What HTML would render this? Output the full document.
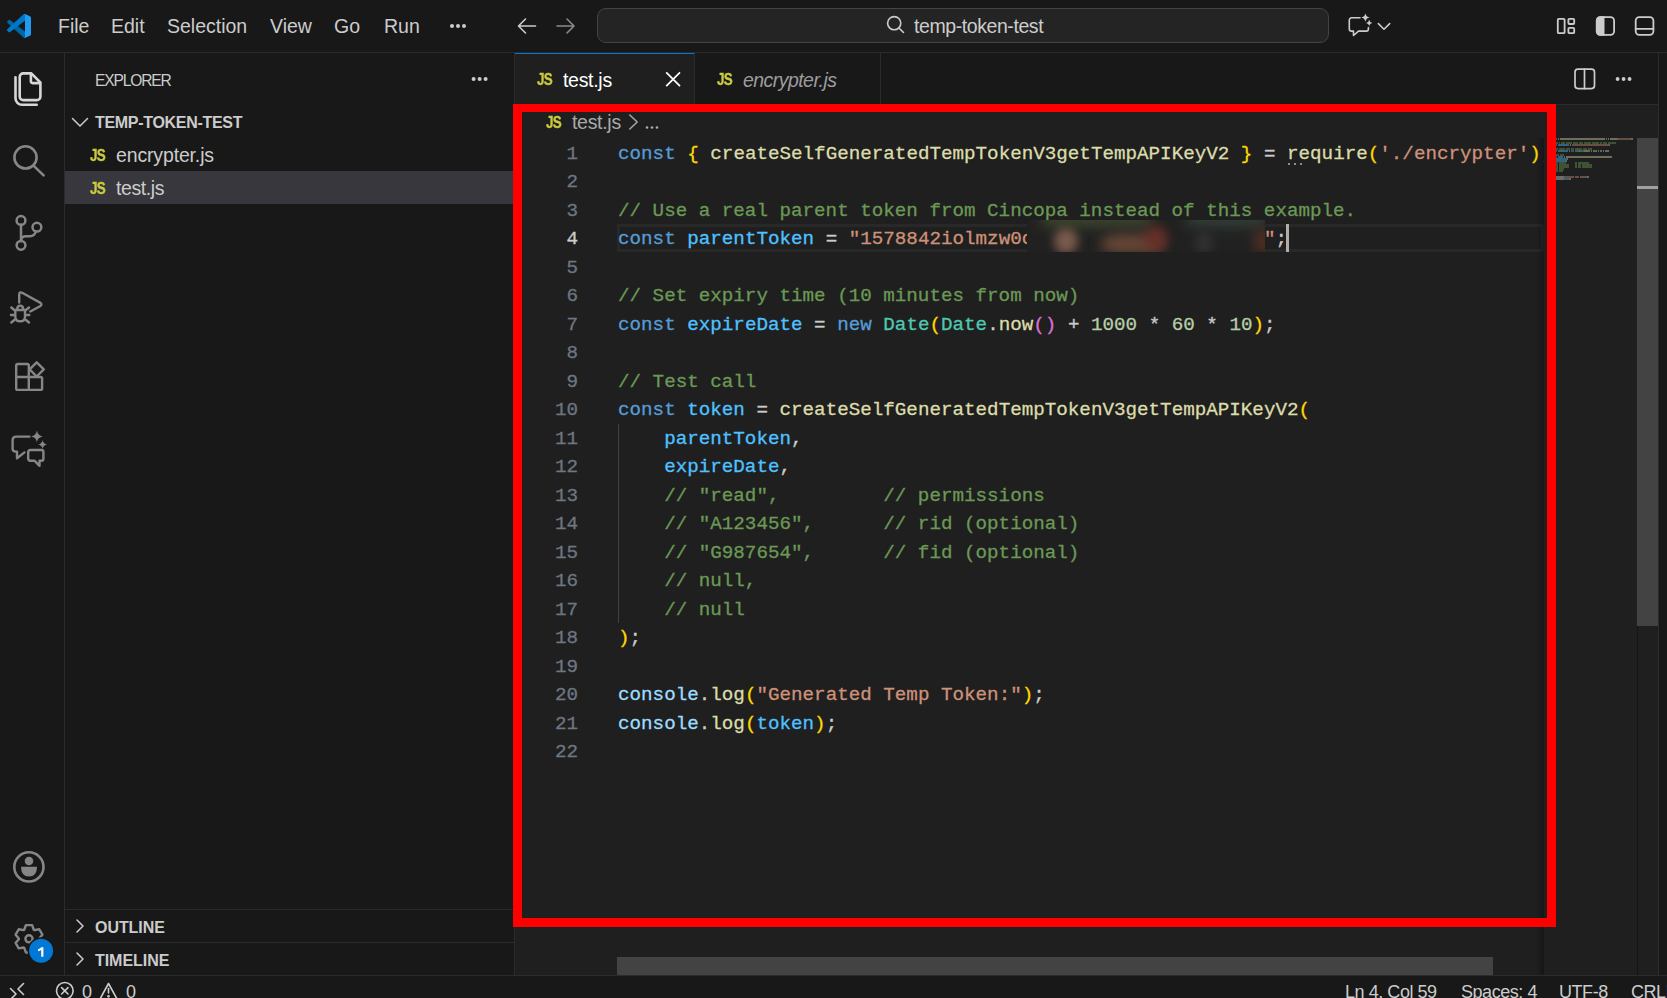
<!DOCTYPE html>
<html><head><meta charset="utf-8">
<style>
*{margin:0;padding:0;box-sizing:border-box}
html,body{width:1667px;height:998px;overflow:hidden;background:#181818;font-family:"Liberation Sans",sans-serif;color:#cccccc}
.a{position:absolute}
.t{position:absolute;white-space:pre;line-height:1}
#titlebar{left:0;top:0;width:1667px;height:53px;background:#181818;border-bottom:1px solid #2b2b2b}
.menu{font-size:19.5px;color:#cccccc;top:17px}
#cc{left:597px;top:8px;width:732px;height:35px;background:#242424;border:1px solid #444444;border-radius:9px}
#actbar{left:0;top:53px;width:65px;height:923px;background:#181818;border-right:1px solid #2b2b2b}
#sidebar{left:65px;top:53px;width:450px;height:923px;background:#181818;border-right:1px solid #2b2b2b}
#tabs{left:515px;top:53px;width:1143px;height:52px;background:#181818;border-bottom:1px solid #2b2b2b}
#editor{left:515px;top:105px;width:1143px;height:871px;background:#1f1f1f}
#status{left:0;top:975px;width:1667px;height:23px;background:#181818;border-top:1px solid #2b2b2b}
.code{font-family:"Liberation Mono",monospace;font-size:19.23px;line-height:28.5px;white-space:pre;-webkit-text-stroke:0.3px currentColor}
.ln{position:absolute;left:540px;width:38px;text-align:right;color:#6e7681}
.cl{position:absolute;left:618px}
.k{color:#569cd6}.v{color:#9cdcfe}.c{color:#4fc1ff}.f{color:#dcdcaa}.s{color:#ce9178}.cm{color:#6a9955}.n{color:#b5cea8}.ty{color:#4ec9b0}.b1{color:#ffd700}.b2{color:#da70d6}.p{color:#cccccc}
.js{font-size:15.6px;font-weight:bold;color:#cbcb41;-webkit-text-stroke:0.35px #cbcb41;letter-spacing:-0.8px;transform:scaleX(0.86);transform-origin:0 0}
</style></head><body>
<div id="titlebar" class="a"></div>
<div id="cc" class="a"></div>
<div id="actbar" class="a"></div>
<div id="sidebar" class="a"></div>
<div id="tabs" class="a"></div>
<div id="editor" class="a"></div>
<div id="status" class="a"></div>

<!-- menu -->
<div class="t menu" style="left:58px">File</div>
<div class="t menu" style="left:111px">Edit</div>
<div class="t menu" style="left:167px">Selection</div>
<div class="t menu" style="left:270px">View</div>
<div class="t menu" style="left:334px">Go</div>
<div class="t menu" style="left:384px">Run</div>
<div class="t menu" style="left:914px;letter-spacing:-0.42px">temp-token-test</div>

<!-- code -->
<div class="a" style="left:617px;top:224px;width:927px;height:28px;border:3px solid #282828"></div>
<div class="a" style="left:618px;top:423.5px;width:1px;height:199.5px;background:#404040"></div>
<div class="code a" id="lns" style="left:530px;top:139.5px;width:48px;text-align:right;color:#6e7681"><div>1</div><div>2</div><div>3</div><div style="color:#cccccc">4</div><div>5</div><div>6</div><div>7</div><div>8</div><div>9</div><div>10</div><div>11</div><div>12</div><div>13</div><div>14</div><div>15</div><div>16</div><div>17</div><div>18</div><div>19</div><div>20</div><div>21</div><div>22</div></div>
<div class="code a p" id="cl" style="left:618px;top:139.5px;width:926px;overflow:hidden;height:600px"><div><span class="k">const</span> <span class="b1">{</span> <span class="f">createSelfGeneratedTempTokenV3getTempAPIKeyV2</span> <span class="b1">}</span> = <span class="f">require</span><span class="b1">(</span><span class="s">'./encrypter'</span><span class="b1">)</span>;</div><div>&#8203;</div><div><span class="cm">// Use a real parent token from Cincopa instead of this example.</span></div><div><span class="k">const</span> <span class="c">parentToken</span> = <span class="s">"1578842iolmzw0c                    "</span>;</div><div>&#8203;</div><div><span class="cm">// Set expiry time (10 minutes from now)</span></div><div><span class="k">const</span> <span class="c">expireDate</span> = <span class="k">new</span> <span class="ty">Date</span><span class="b1">(</span><span class="ty">Date</span>.<span class="f">now</span><span class="b2">()</span> + <span class="n">1000</span> * <span class="n">60</span> * <span class="n">10</span><span class="b1">)</span>;</div><div>&#8203;</div><div><span class="cm">// Test call</span></div><div><span class="k">const</span> <span class="c">token</span> = <span class="f">createSelfGeneratedTempTokenV3getTempAPIKeyV2</span><span class="b1">(</span></div><div>    <span class="c">parentToken</span>,</div><div>    <span class="c">expireDate</span>,</div><div>    <span class="cm">// "read",         // permissions</span></div><div>    <span class="cm">// "A123456",      // rid (optional)</span></div><div>    <span class="cm">// "G987654",      // fid (optional)</span></div><div>    <span class="cm">// null,</span></div><div>    <span class="cm">// null</span></div><div><span class="b1">)</span>;</div><div>&#8203;</div><div><span class="v">console</span>.<span class="f">log</span><span class="b1">(</span><span class="s">"Generated Temp Token:"</span><span class="b1">)</span>;</div><div><span class="v">console</span>.<span class="f">log</span><span class="b1">(</span><span class="c">token</span><span class="b1">)</span>;</div><div>&#8203;</div></div>

<!-- sidebar content -->
<div class="t" style="left:95px;top:72.5px;font-size:15.6px;color:#cccccc;letter-spacing:-1.15px">EXPLORER</div>
<div class="t" style="left:95px;top:115px;font-size:16px;font-weight:bold;color:#cccccc;letter-spacing:-0.3px">TEMP-TOKEN-TEST</div>
<div class="a" style="left:65px;top:171px;width:449px;height:33px;background:#37373d"></div>
<div class="t" style="left:116px;top:146px;font-size:19.5px;color:#cccccc;letter-spacing:-0.15px">encrypter.js</div>
<div class="t" style="left:116px;top:179px;font-size:19.5px;color:#cccccc;letter-spacing:-0.4px">test.js</div>
<div class="a" style="left:65px;top:909px;width:449px;height:1px;background:#2b2b2b"></div>
<div class="a" style="left:65px;top:942px;width:449px;height:1px;background:#2b2b2b"></div>
<div class="t" style="left:95px;top:920px;font-size:16px;font-weight:bold;color:#cccccc;letter-spacing:-0.05px">OUTLINE</div>
<div class="t" style="left:95px;top:953px;font-size:16px;font-weight:bold;color:#cccccc;letter-spacing:-0.05px">TIMELINE</div>

<!-- tabs -->
<div class="a" style="left:515px;top:53px;width:180px;height:52px;background:#1f1f1f;border-right:1px solid #2b2b2b;border-top:1px solid #0078d4"></div>
<div class="a" style="left:695px;top:53px;width:186px;height:51px;border-right:1px solid #2b2b2b"></div>
<div class="t" style="left:563px;top:71px;font-size:19.5px;color:#ffffff;letter-spacing:-0.3px">test.js</div>
<div class="t" style="left:743px;top:71px;font-size:19.5px;color:#9d9d9d;font-style:italic;letter-spacing:-0.55px">encrypter.js</div>
<div class="t" style="left:572px;top:113.2px;font-size:19.5px;color:#a9a9a9;letter-spacing:-0.3px">test.js</div>


<!-- right aux border -->
<div class="a" style="left:1658px;top:53px;width:1px;height:922px;background:#2b2b2b"></div>
<!-- blur box -->
<div class="a" style="left:1027px;top:220px;width:238px;height:32px;overflow:hidden;background:#212121">
 <div class="a" style="left:15px;top:-10px;width:110px;height:16px;background:#3f4a30;filter:blur(7px)"></div>
 <div class="a" style="left:160px;top:-10px;width:80px;height:16px;background:#34433a;filter:blur(7px)"></div>
 <div class="a" style="left:27px;top:8px;width:24px;height:26px;border-radius:50%;background:#7a5a4c;filter:blur(5px)"></div>
 <div class="a" style="left:74px;top:14px;width:62px;height:20px;border-radius:40%;background:#664636;filter:blur(6px)"></div>
 <div class="a" style="left:118px;top:6px;width:22px;height:24px;border-radius:50%;background:#6a2e28;filter:blur(6px)"></div>
 <div class="a" style="left:168px;top:12px;width:18px;height:22px;border-radius:50%;background:#313131;filter:blur(5px)"></div>
 <div class="a" style="left:226px;top:8px;width:20px;height:26px;border-radius:50%;background:#4c2e24;filter:blur(6px)"></div>
</div>
<!-- cursor -->
<div class="a" style="left:1286px;top:224px;width:3px;height:28px;background:#aeafad"></div>
<!-- require hint dots -->
<div class="a" style="left:1288px;top:163px;width:2px;height:2px;background:#8b8b8b"></div>
<div class="a" style="left:1294px;top:163px;width:2px;height:2px;background:#8b8b8b"></div>
<div class="a" style="left:1300px;top:163px;width:2px;height:2px;background:#8b8b8b"></div>
<!-- text clip shadow -->
<div class="a" style="left:1536px;top:138px;width:8px;height:837px;background:linear-gradient(90deg,rgba(0,0,0,0),rgba(0,0,0,.3))"></div>
<div class="a" style="left:1544px;top:105px;width:93px;height:870px;background:#1f1f1f"></div>
<!-- minimap -->
<div class="a" style="left:1552px;top:138px;width:5px;height:2px;background:#569cd6;opacity:.42"></div>
<div class="a" style="left:1558px;top:138px;width:1px;height:2px;background:#cccccc;opacity:.42"></div>
<div class="a" style="left:1560px;top:138px;width:45px;height:2px;background:#dcdcaa;opacity:.42"></div>
<div class="a" style="left:1606px;top:138px;width:1px;height:2px;background:#cccccc;opacity:.42"></div>
<div class="a" style="left:1608px;top:138px;width:1px;height:2px;background:#cccccc;opacity:.42"></div>
<div class="a" style="left:1610px;top:138px;width:7px;height:2px;background:#dcdcaa;opacity:.42"></div>
<div class="a" style="left:1617px;top:138px;width:1px;height:2px;background:#cccccc;opacity:.42"></div>
<div class="a" style="left:1618px;top:138px;width:13px;height:2px;background:#ce9178;opacity:.42"></div>
<div class="a" style="left:1631px;top:138px;width:1px;height:2px;background:#cccccc;opacity:.42"></div>
<div class="a" style="left:1632px;top:138px;width:1px;height:2px;background:#cccccc;opacity:.42"></div>
<div class="a" style="left:1555px;top:142px;width:3px;height:2px;background:#6a9955;opacity:.42"></div>
<div class="a" style="left:1559px;top:142px;width:1px;height:2px;background:#6a9955;opacity:.42"></div>
<div class="a" style="left:1561px;top:142px;width:4px;height:2px;background:#6a9955;opacity:.42"></div>
<div class="a" style="left:1566px;top:142px;width:6px;height:2px;background:#6a9955;opacity:.42"></div>
<div class="a" style="left:1573px;top:142px;width:5px;height:2px;background:#6a9955;opacity:.42"></div>
<div class="a" style="left:1579px;top:142px;width:4px;height:2px;background:#6a9955;opacity:.42"></div>
<div class="a" style="left:1584px;top:142px;width:7px;height:2px;background:#6a9955;opacity:.42"></div>
<div class="a" style="left:1592px;top:142px;width:7px;height:2px;background:#6a9955;opacity:.42"></div>
<div class="a" style="left:1600px;top:142px;width:2px;height:2px;background:#6a9955;opacity:.42"></div>
<div class="a" style="left:1603px;top:142px;width:4px;height:2px;background:#6a9955;opacity:.42"></div>
<div class="a" style="left:1608px;top:142px;width:8px;height:2px;background:#6a9955;opacity:.42"></div>
<div class="a" style="left:1552px;top:144px;width:5px;height:2px;background:#569cd6;opacity:.42"></div>
<div class="a" style="left:1558px;top:144px;width:11px;height:2px;background:#4fc1ff;opacity:.42"></div>
<div class="a" style="left:1570px;top:144px;width:1px;height:2px;background:#cccccc;opacity:.42"></div>
<div class="a" style="left:1572px;top:144px;width:37px;height:2px;background:#ce9178;opacity:.42"></div>
<div class="a" style="left:1609px;top:144px;width:1px;height:2px;background:#cccccc;opacity:.42"></div>
<div class="a" style="left:1555px;top:148px;width:3px;height:2px;background:#6a9955;opacity:.42"></div>
<div class="a" style="left:1559px;top:148px;width:6px;height:2px;background:#6a9955;opacity:.42"></div>
<div class="a" style="left:1566px;top:148px;width:4px;height:2px;background:#6a9955;opacity:.42"></div>
<div class="a" style="left:1571px;top:148px;width:3px;height:2px;background:#6a9955;opacity:.42"></div>
<div class="a" style="left:1575px;top:148px;width:7px;height:2px;background:#6a9955;opacity:.42"></div>
<div class="a" style="left:1583px;top:148px;width:4px;height:2px;background:#6a9955;opacity:.42"></div>
<div class="a" style="left:1588px;top:148px;width:4px;height:2px;background:#6a9955;opacity:.42"></div>
<div class="a" style="left:1552px;top:150px;width:5px;height:2px;background:#569cd6;opacity:.42"></div>
<div class="a" style="left:1558px;top:150px;width:10px;height:2px;background:#4fc1ff;opacity:.42"></div>
<div class="a" style="left:1569px;top:150px;width:1px;height:2px;background:#cccccc;opacity:.42"></div>
<div class="a" style="left:1571px;top:150px;width:3px;height:2px;background:#569cd6;opacity:.42"></div>
<div class="a" style="left:1575px;top:150px;width:4px;height:2px;background:#4ec9b0;opacity:.42"></div>
<div class="a" style="left:1579px;top:150px;width:1px;height:2px;background:#cccccc;opacity:.42"></div>
<div class="a" style="left:1580px;top:150px;width:4px;height:2px;background:#4ec9b0;opacity:.42"></div>
<div class="a" style="left:1584px;top:150px;width:1px;height:2px;background:#cccccc;opacity:.42"></div>
<div class="a" style="left:1585px;top:150px;width:3px;height:2px;background:#dcdcaa;opacity:.42"></div>
<div class="a" style="left:1588px;top:150px;width:2px;height:2px;background:#cccccc;opacity:.42"></div>
<div class="a" style="left:1591px;top:150px;width:1px;height:2px;background:#cccccc;opacity:.42"></div>
<div class="a" style="left:1593px;top:150px;width:4px;height:2px;background:#b5cea8;opacity:.42"></div>
<div class="a" style="left:1598px;top:150px;width:1px;height:2px;background:#cccccc;opacity:.42"></div>
<div class="a" style="left:1600px;top:150px;width:2px;height:2px;background:#b5cea8;opacity:.42"></div>
<div class="a" style="left:1603px;top:150px;width:1px;height:2px;background:#cccccc;opacity:.42"></div>
<div class="a" style="left:1605px;top:150px;width:2px;height:2px;background:#b5cea8;opacity:.42"></div>
<div class="a" style="left:1607px;top:150px;width:1px;height:2px;background:#cccccc;opacity:.42"></div>
<div class="a" style="left:1608px;top:150px;width:1px;height:2px;background:#cccccc;opacity:.42"></div>
<div class="a" style="left:1555px;top:154px;width:4px;height:2px;background:#6a9955;opacity:.42"></div>
<div class="a" style="left:1560px;top:154px;width:4px;height:2px;background:#6a9955;opacity:.42"></div>
<div class="a" style="left:1552px;top:156px;width:5px;height:2px;background:#569cd6;opacity:.42"></div>
<div class="a" style="left:1558px;top:156px;width:5px;height:2px;background:#4fc1ff;opacity:.42"></div>
<div class="a" style="left:1564px;top:156px;width:1px;height:2px;background:#cccccc;opacity:.42"></div>
<div class="a" style="left:1566px;top:156px;width:45px;height:2px;background:#dcdcaa;opacity:.42"></div>
<div class="a" style="left:1611px;top:156px;width:1px;height:2px;background:#cccccc;opacity:.42"></div>
<div class="a" style="left:1556px;top:158px;width:11px;height:2px;background:#4fc1ff;opacity:.42"></div>
<div class="a" style="left:1567px;top:158px;width:1px;height:2px;background:#cccccc;opacity:.42"></div>
<div class="a" style="left:1556px;top:160px;width:10px;height:2px;background:#4fc1ff;opacity:.42"></div>
<div class="a" style="left:1566px;top:160px;width:1px;height:2px;background:#cccccc;opacity:.42"></div>
<div class="a" style="left:1556px;top:162px;width:2px;height:2px;background:#6a9955;opacity:.42"></div>
<div class="a" style="left:1559px;top:162px;width:7px;height:2px;background:#6a9955;opacity:.42"></div>
<div class="a" style="left:1575px;top:162px;width:2px;height:2px;background:#6a9955;opacity:.42"></div>
<div class="a" style="left:1578px;top:162px;width:11px;height:2px;background:#6a9955;opacity:.42"></div>
<div class="a" style="left:1556px;top:164px;width:2px;height:2px;background:#6a9955;opacity:.42"></div>
<div class="a" style="left:1559px;top:164px;width:10px;height:2px;background:#6a9955;opacity:.42"></div>
<div class="a" style="left:1575px;top:164px;width:2px;height:2px;background:#6a9955;opacity:.42"></div>
<div class="a" style="left:1578px;top:164px;width:3px;height:2px;background:#6a9955;opacity:.42"></div>
<div class="a" style="left:1582px;top:164px;width:10px;height:2px;background:#6a9955;opacity:.42"></div>
<div class="a" style="left:1556px;top:166px;width:2px;height:2px;background:#6a9955;opacity:.42"></div>
<div class="a" style="left:1559px;top:166px;width:10px;height:2px;background:#6a9955;opacity:.42"></div>
<div class="a" style="left:1575px;top:166px;width:2px;height:2px;background:#6a9955;opacity:.42"></div>
<div class="a" style="left:1578px;top:166px;width:3px;height:2px;background:#6a9955;opacity:.42"></div>
<div class="a" style="left:1582px;top:166px;width:10px;height:2px;background:#6a9955;opacity:.42"></div>
<div class="a" style="left:1556px;top:168px;width:2px;height:2px;background:#6a9955;opacity:.42"></div>
<div class="a" style="left:1559px;top:168px;width:5px;height:2px;background:#6a9955;opacity:.42"></div>
<div class="a" style="left:1556px;top:170px;width:2px;height:2px;background:#6a9955;opacity:.42"></div>
<div class="a" style="left:1559px;top:170px;width:4px;height:2px;background:#6a9955;opacity:.42"></div>
<div class="a" style="left:1552px;top:176px;width:7px;height:2px;background:#9cdcfe;opacity:.42"></div>
<div class="a" style="left:1559px;top:176px;width:1px;height:2px;background:#cccccc;opacity:.42"></div>
<div class="a" style="left:1560px;top:176px;width:3px;height:2px;background:#dcdcaa;opacity:.42"></div>
<div class="a" style="left:1563px;top:176px;width:1px;height:2px;background:#cccccc;opacity:.42"></div>
<div class="a" style="left:1564px;top:176px;width:10px;height:2px;background:#ce9178;opacity:.42"></div>
<div class="a" style="left:1575px;top:176px;width:4px;height:2px;background:#ce9178;opacity:.42"></div>
<div class="a" style="left:1580px;top:176px;width:7px;height:2px;background:#ce9178;opacity:.42"></div>
<div class="a" style="left:1587px;top:176px;width:1px;height:2px;background:#cccccc;opacity:.42"></div>
<div class="a" style="left:1588px;top:176px;width:1px;height:2px;background:#cccccc;opacity:.42"></div>
<div class="a" style="left:1552px;top:178px;width:7px;height:2px;background:#9cdcfe;opacity:.42"></div>
<div class="a" style="left:1559px;top:178px;width:1px;height:2px;background:#cccccc;opacity:.42"></div>
<div class="a" style="left:1560px;top:178px;width:3px;height:2px;background:#dcdcaa;opacity:.42"></div>
<div class="a" style="left:1563px;top:178px;width:1px;height:2px;background:#cccccc;opacity:.42"></div>
<div class="a" style="left:1564px;top:178px;width:5px;height:2px;background:#4fc1ff;opacity:.42"></div>
<div class="a" style="left:1569px;top:178px;width:1px;height:2px;background:#cccccc;opacity:.42"></div>
<div class="a" style="left:1570px;top:178px;width:1px;height:2px;background:#cccccc;opacity:.42"></div>
<!-- scrollbars -->
<div class="a" style="left:1637px;top:138px;width:1px;height:837px;background:#141414"></div>
<div class="a" style="left:1637px;top:138px;width:21px;height:488px;background:#434343"></div>
<div class="a" style="left:1637px;top:186px;width:21px;height:3px;background:#a0a0a0"></div>
<div class="a" style="left:617px;top:957px;width:876px;height:18px;background:#434343"></div>

<svg class="a" style="left:0;top:0" width="1667" height="998" viewBox="0 0 1667 998" fill="none" stroke-linecap="round" stroke-linejoin="round">
 <!-- vscode logo -->
 <g transform="translate(7,14) scale(0.24)">
  <path fill="#0065a9" d="M96.46 10.8L75.86.87a6.23 6.23 0 0 0-7.1 1.21L29.55 37.85 12.47 24.88a4.16 4.16 0 0 0-5.32.24L1.66 30.11a4.16 4.16 0 0 0 0 6.15L16.47 50 1.66 63.74a4.16 4.16 0 0 0 0 6.15l5.49 4.99a4.16 4.16 0 0 0 5.32.24l17.08-12.97 39.21 35.77a6.23 6.23 0 0 0 7.1 1.21l20.6-9.92A6.24 6.24 0 0 0 100 83.6V16.4a6.24 6.24 0 0 0-3.54-5.6zM75.01 72.7L45.1 50l29.91-22.7v45.4z"/>
  <path fill="#007acc" d="M96.46 10.8L75.86.87a6.23 6.23 0 0 0-7.1 1.21L1.66 63.74a4.16 4.16 0 0 0 0 6.15l5.49 4.99a4.16 4.16 0 0 0 5.32.24L96.46 10.8z" opacity="0.9"/>
  <path fill="#1f9cf0" d="M68.76 2.08a6.23 6.23 0 0 1 7.1-1.21l20.6 9.92A6.24 6.24 0 0 1 100 16.4v67.2a6.24 6.24 0 0 1-3.54 5.62l-20.6 9.92a6.23 6.23 0 0 1-7.1-1.21 3.66 3.66 0 0 0 6.25-2.59V4.67a3.66 3.66 0 0 0-6.25-2.59z"/>
 </g>
 <!-- title dots -->
 <g fill="#cccccc" stroke="none"><circle cx="452" cy="26" r="2"/><circle cx="458" cy="26" r="2"/><circle cx="464" cy="26" r="2"/></g>
 <!-- nav arrows -->
 <g stroke="#cccccc" stroke-width="1.6"><path d="M518.5 26H535.5M518.5 26L525.5 19M518.5 26L525.5 33"/></g>
 <g stroke="#8a8a8a" stroke-width="1.6"><path d="M557 26H574M574 26L567 19M574 26L567 33"/></g>
 <!-- search in command center -->
 <g stroke="#cccccc" stroke-width="1.6"><circle cx="894.2" cy="23.2" r="6.6"/><path d="M899 28L903.5 32.5"/></g>
 <!-- title chat icon -->
 <g stroke="#cccccc" stroke-width="1.6">
  <path d="M1360 17.8H1351.5a2.2 2.2 0 0 0-2.2 2.2V28.9a2.2 2.2 0 0 0 2.2 2.2H1353.5V35.5L1358.5 31.1H1366.2a2.2 2.2 0 0 0 2.2-2.2V27.5"/>
  <path d="M1378.4 23.6L1384 29.2L1389.7 23.6"/>
 </g>
 <g fill="#cccccc" stroke="none">
  <path d="M1365.4 13.2Q1366 16.9 1369.7 17.5Q1366 18.1 1365.4 21.8Q1364.8 18.1 1361.1 17.5Q1364.8 16.9 1365.4 13.2Z"/>
  <path d="M1369.2 19.8Q1369.6 22.5 1372.3 22.9Q1369.6 23.3 1369.2 26Q1368.8 23.3 1366.1 22.9Q1368.8 22.5 1369.2 19.8Z"/>
 </g>
 <!-- layout icons -->
 <g stroke="#cccccc" stroke-width="1.8">
  <rect x="1557.8" y="18.8" width="6.8" height="14.4" rx="1"/>
  <rect x="1568.4" y="18.8" width="5.8" height="5.2" rx="1"/>
  <rect x="1568.4" y="27.8" width="5.8" height="5.4" rx="1"/>
  <rect x="1596.8" y="17.2" width="17.3" height="17.6" rx="3.6"/>
  <rect x="1635.7" y="17.2" width="17.7" height="17.6" rx="3.6"/>
  <path d="M1635.7 28.8H1653.4"/>
 </g>
 <path fill="#cccccc" d="M1600.4 16.3H1604.5V35.7H1600.4A4.5 4.5 0 0 1 1595.9 31.2V20.8A4.5 4.5 0 0 1 1600.4 16.3Z"/>

 <!-- activity: explorer -->
 <g stroke="#d7d7d7" stroke-width="2.6">
  <path d="M31.3 73.4H23.3a3.6 3.6 0 0 0-3.6 3.6V96.5a3.6 3.6 0 0 0 3.6 3.6H36.8a3.6 3.6 0 0 0 3.6-3.6V82.5Z"/>
  <path d="M30.9 74V81.6a1.5 1.5 0 0 0 1.5 1.5H40"/>
  <path d="M15.5 77.2V98.2a6.5 6.5 0 0 0 6.5 6.5H36.7"/>
 </g>
 <!-- search -->
 <g stroke="#868686" stroke-width="2.6">
  <circle cx="25.5" cy="157.4" r="11.1"/>
  <path d="M33.5 165.6L43.6 175.4"/>
 </g>
 <!-- source control -->
 <g stroke="#868686" stroke-width="2.5">
  <circle cx="21" cy="220.4" r="4.4"/>
  <circle cx="21" cy="245.3" r="4.4"/>
  <circle cx="36.9" cy="227.2" r="4.4"/>
  <path d="M21 224.8V240.9"/>
  <path d="M35.8 231.5Q34.5 236.2 30 236.2H26Q21.5 236.2 21 240.5"/>
 </g>
 <!-- run & debug -->
 <g stroke="#868686" stroke-width="2.4">
  <path d="M19.2 302.6V294.8Q19.2 291.4 22.2 292.8L40 302.6Q42.8 304.5 40 306.2L30.3 311.5"/>
  <path d="M17.2 309.5Q17.2 305.6 20.2 305.6Q23.2 305.6 23.2 309.5"/>
  <path d="M15.3 310H25V317Q25 321.3 20.2 321.3Q15.3 321.3 15.3 317Z"/>
  <path d="M11.3 307.5L14.3 310M29 307.5L26 310M11 315H14M26.2 315H29.3M11.3 322.5L14.3 320M29 322.5L26 320"/>
 </g>
 <!-- extensions -->
 <g stroke="#868686" stroke-width="2.4">
  <path d="M16.2 365.5Q16.2 364 17.7 364H27.3Q28.8 364 28.8 365.5V377H40.6Q42.1 377 42.1 378.5V388.4Q42.1 389.9 40.6 389.9H17.7Q16.2 389.9 16.2 388.4Z"/>
  <path d="M16.2 377H28.8V389.9"/>
  <path d="M36.7 362.3L43.8 369.4L36.7 376.5L29.6 369.4Z"/>
 </g>
 <!-- chat -->
 <g stroke="#868686" stroke-width="2.4">
  <path d="M29.4 436.6H16.2Q12.6 436.6 12.6 440.2V448.4Q12.6 451.6 15.8 451.6H17V458.2L24.5 452.4"/>
  <path d="M30.6 450H41.6Q43.4 450 43.4 451.8V458.8Q43.4 460.8 41.4 460.8H39.5V465.8L34.7 460.8H30.4Q28.2 460.8 28.2 458.6V452.4Q28.2 450 30.6 450Z"/>
 </g>
 <g fill="#868686" stroke="none">
  <path d="M36.9 430.6Q37.7 435.6 42.7 436.4Q37.7 437.2 36.9 442.2Q36.1 437.2 31.1 436.4Q36.1 435.6 36.9 430.6Z"/>
  <path d="M42.6 440Q43.2 443.9 47.1 444.5Q43.2 445.1 42.6 449Q42 445.1 38.1 444.5Q42 443.9 42.6 440Z"/>
 </g>
 <!-- account -->
 <g stroke="#868686" stroke-width="2.6"><circle cx="28.9" cy="866.9" r="14.6"/></g>
 <g fill="#868686" stroke="none">
  <circle cx="29" cy="861" r="4.3"/>
  <path d="M21 866.8H37Q37 876.6 29 876.6Q21 876.6 21 866.8Z"/>
 </g>
 <!-- settings gear -->
 <g stroke="#868686" stroke-width="2.4">
  <path d="M24.21 929.79 L25.85 925.16 L32.15 925.16 L33.79 929.79 L34.41 930.15 L39.24 929.25 L42.39 934.71 L39.19 938.44 L39.19 939.16 L42.39 942.89 L39.24 948.35 L34.41 947.45 L33.79 947.81 L32.15 952.44 L25.85 952.44 L24.21 947.81 L23.59 947.45 L18.76 948.35 L15.61 942.89 L18.81 939.16 L18.81 938.44 L15.61 934.71 L18.76 929.25 L23.59 930.15 Z"/>
  <circle cx="29" cy="938.8" r="3.6"/>
 </g>
 <circle cx="41.1" cy="950.8" r="13.5" fill="#181818" stroke="none"/>
 <circle cx="41.1" cy="950.8" r="12" fill="#0078d4" stroke="none"/>

 <!-- explorer dots -->
 <g fill="#cccccc" stroke="none"><circle cx="473.6" cy="79" r="2"/><circle cx="479.6" cy="79" r="2"/><circle cx="485.6" cy="79" r="2"/></g>
 <!-- folder chevron -->
 <g stroke="#cccccc" stroke-width="1.5">
  <path d="M72.5 118.5L80 126L87.5 118.5"/>
  <path d="M77 920L83 926L77 932"/>
  <path d="M77 953L83 959L77 965"/>
 </g>
 <!-- tab close -->
 <g stroke="#ffffff" stroke-width="1.7" stroke-linecap="butt"><path d="M666.2 72.4L680 86.2M680 72.4L666.2 86.2"/></g>
 <!-- split editor -->
 <g stroke="#cccccc" stroke-width="1.7">
  <rect x="1575" y="69.2" width="19.5" height="19.4" rx="3"/>
  <path d="M1584.5 69.2V88.6"/>
 </g>
 <g fill="#cccccc" stroke="none"><circle cx="1617.6" cy="79" r="1.9"/><circle cx="1623.6" cy="79" r="1.9"/><circle cx="1629.6" cy="79" r="1.9"/></g>
 <!-- breadcrumb chevron and dots -->
 <g stroke="#a9a9a9" stroke-width="1.5"><path d="M629.8 115L637.2 122L629.8 129"/></g>
 <g fill="#a9a9a9" stroke="none"><circle cx="647" cy="127.5" r="1.3"/><circle cx="652" cy="127.5" r="1.3"/><circle cx="657" cy="127.5" r="1.3"/></g>
 <!-- status bar -->
 <g stroke="#cccccc" stroke-width="1.6">
  <path d="M10.5 988.5L16 994L10.5 999.5M23.5 983.5L18 989L23.5 994.5"/>
  <circle cx="64.8" cy="990.8" r="8.3"/>
  <path d="M61.6 987.6L68 994M68 987.6L61.6 994"/>
  <path d="M108.5 983.5L100 999M108.5 983.5L117 999"/>
  <path d="M108.5 988.5V993"/><circle cx="108.5" cy="996.3" r="0.6"/>
 </g>
</svg>

<svg class="a" style="left:0;top:0" width="60" height="998"><path d="M41.2 947.3H43.4V956.8H41.2V949.9Q39.9 950.9 38 951.3V949.3Q40.2 948.6 41.2 947.3Z" fill="#ffffff"/></svg>
<div class="t js" style="left:90px;top:147.5px">JS</div>
<div class="t js" style="left:90px;top:180.5px">JS</div>
<div class="t js" style="left:537px;top:71.5px">JS</div>
<div class="t js" style="left:717px;top:71.5px">JS</div>
<div class="t js" style="left:546px;top:114.5px">JS</div>
<div class="t" style="left:82px;top:982.5px;font-size:18px;color:#cccccc">0</div>
<div class="t" style="left:126px;top:982.5px;font-size:18px;color:#cccccc">0</div>
<div class="t" style="left:1345px;top:982.5px;font-size:18px;color:#cccccc;letter-spacing:-0.45px">Ln 4, Col 59</div>
<div class="t" style="left:1461px;top:982.5px;font-size:18px;color:#cccccc;letter-spacing:-0.45px">Spaces: 4</div>
<div class="t" style="left:1559px;top:982.5px;font-size:18px;color:#cccccc;letter-spacing:-0.45px">UTF-8</div>
<div class="t" style="left:1631px;top:982.5px;font-size:18px;color:#cccccc;letter-spacing:-0.45px">CRLF</div>

<!-- red box -->
<div class="a" style="left:513px;top:104px;width:1043px;height:823px;border:solid #ff0000;border-width:8px 9px 9px 9px"></div>
</body></html>
